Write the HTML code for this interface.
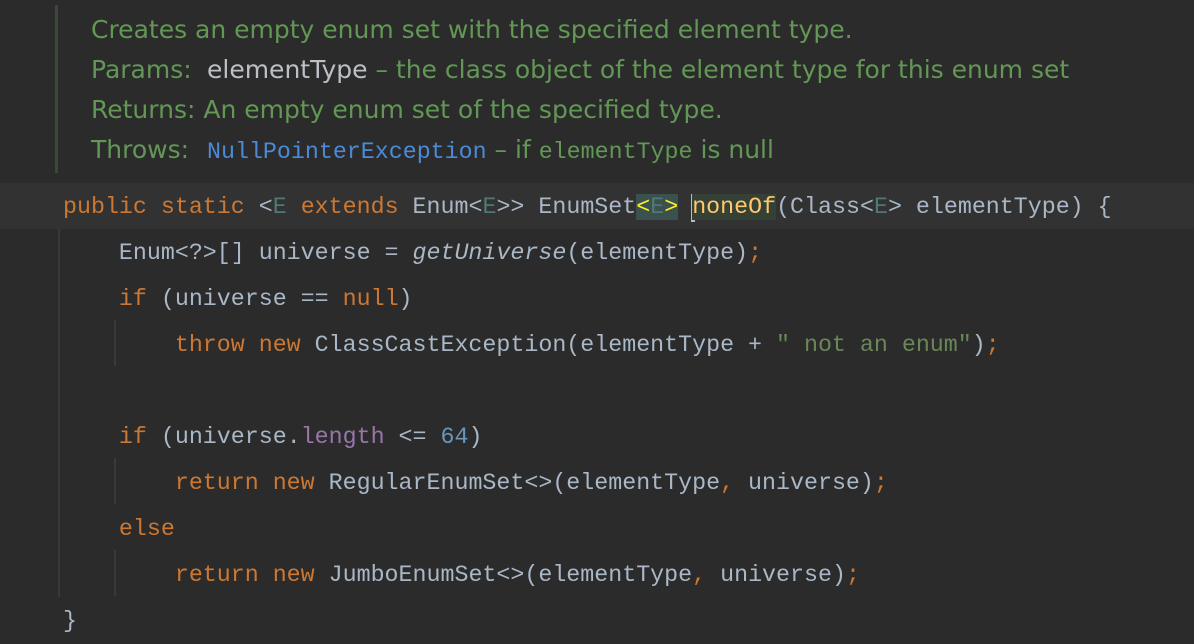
<!DOCTYPE html>
<html><head><style>
body{margin:0;width:1194px;height:642px;background:#2b2b2b;overflow:hidden;position:relative}
.doc{position:absolute;left:55px;top:5px;height:168px;border-left:3px solid #3b4a37;}
.dl{position:absolute;left:91px;font-family:"DejaVu Sans",sans-serif;font-size:25px;color:#629755;white-space:pre;line-height:40px;height:40px}
.dl .w{color:#bcc0c4}.dl .m{font-family:"Liberation Mono",monospace;font-size:23.3px}
.dl .b{color:#4c8ad6}
.lb{display:inline-block;width:116px}
.cur{position:absolute;left:0;top:183px;width:1194px;height:46px;background:#323232}
.cl{position:absolute;left:63px;font-family:"Liberation Mono",monospace;font-size:23.3px;color:#a9b7c6;white-space:pre;line-height:46px;height:46px}
.k{color:#cc7832}.t{color:#507874}.i{font-style:italic}.p{color:#9876aa}.n{color:#6897bb}.s{color:#6a8759}
.g{position:absolute;width:2px;background:#393939}
.br{background:#3b514d;color:#ffef28}
.hl{background:#344134;color:#ffc66d}
</style></head><body>
<div class="doc"></div>
<div class="dl" style="top:10px">Creates an empty enum set with the specified element type.</div>
<div class="dl" style="top:50px"><span class="lb">Params:</span><span class="w">elementType</span> – the class object of the element type for this enum set</div>
<div class="dl" style="top:90px">Returns: An empty enum set of the specified type.</div>
<div class="dl" style="top:130px"><span class="lb">Throws:</span><span class="b m">NullPointerException</span> – if <span class="m">elementType</span> is null</div>
<div class="cur"></div>
<div class="g" style="left:58px;top:229px;height:368px"></div>
<div class="g" style="left:114px;top:320px;height:46px"></div>
<div class="g" style="left:114px;top:458px;height:46px"></div>
<div class="g" style="left:114px;top:550px;height:46px"></div>
<div style="position:absolute;left:691px;top:194px;width:4px;height:28px;background:#bbb"></div>
<div class="cl" style="top:184px"><span class="k">public static</span> &lt;<span class="t">E</span> <span class="k">extends</span> Enum&lt;<span class="t">E</span>&gt;&gt; EnumSet<span class="br">&lt;</span><span class="t" style="background:#3b514d">E</span><span class="br">&gt;</span> <span class="hl">noneOf</span>(Class&lt;<span class="t">E</span>&gt; elementType) {</div>
<div class="cl" style="top:230px">    Enum&lt;?&gt;[] universe = <span class="i">getUniverse</span>(elementType)<span class="k">;</span></div>
<div class="cl" style="top:276px">    <span class="k">if</span> (universe == <span class="k">null</span>)</div>
<div class="cl" style="top:322px">        <span class="k">throw new</span> ClassCastException(elementType + <span class="s">" not an enum"</span>)<span class="k">;</span></div>
<div class="cl" style="top:414px">    <span class="k">if</span> (universe.<span class="p">length</span> &lt;= <span class="n">64</span>)</div>
<div class="cl" style="top:460px">        <span class="k">return new</span> RegularEnumSet&lt;&gt;(elementType<span class="k">,</span> universe)<span class="k">;</span></div>
<div class="cl" style="top:506px">    <span class="k">else</span></div>
<div class="cl" style="top:552px">        <span class="k">return new</span> JumboEnumSet&lt;&gt;(elementType<span class="k">,</span> universe)<span class="k">;</span></div>
<div class="cl" style="top:598px">}</div>
</body></html>
